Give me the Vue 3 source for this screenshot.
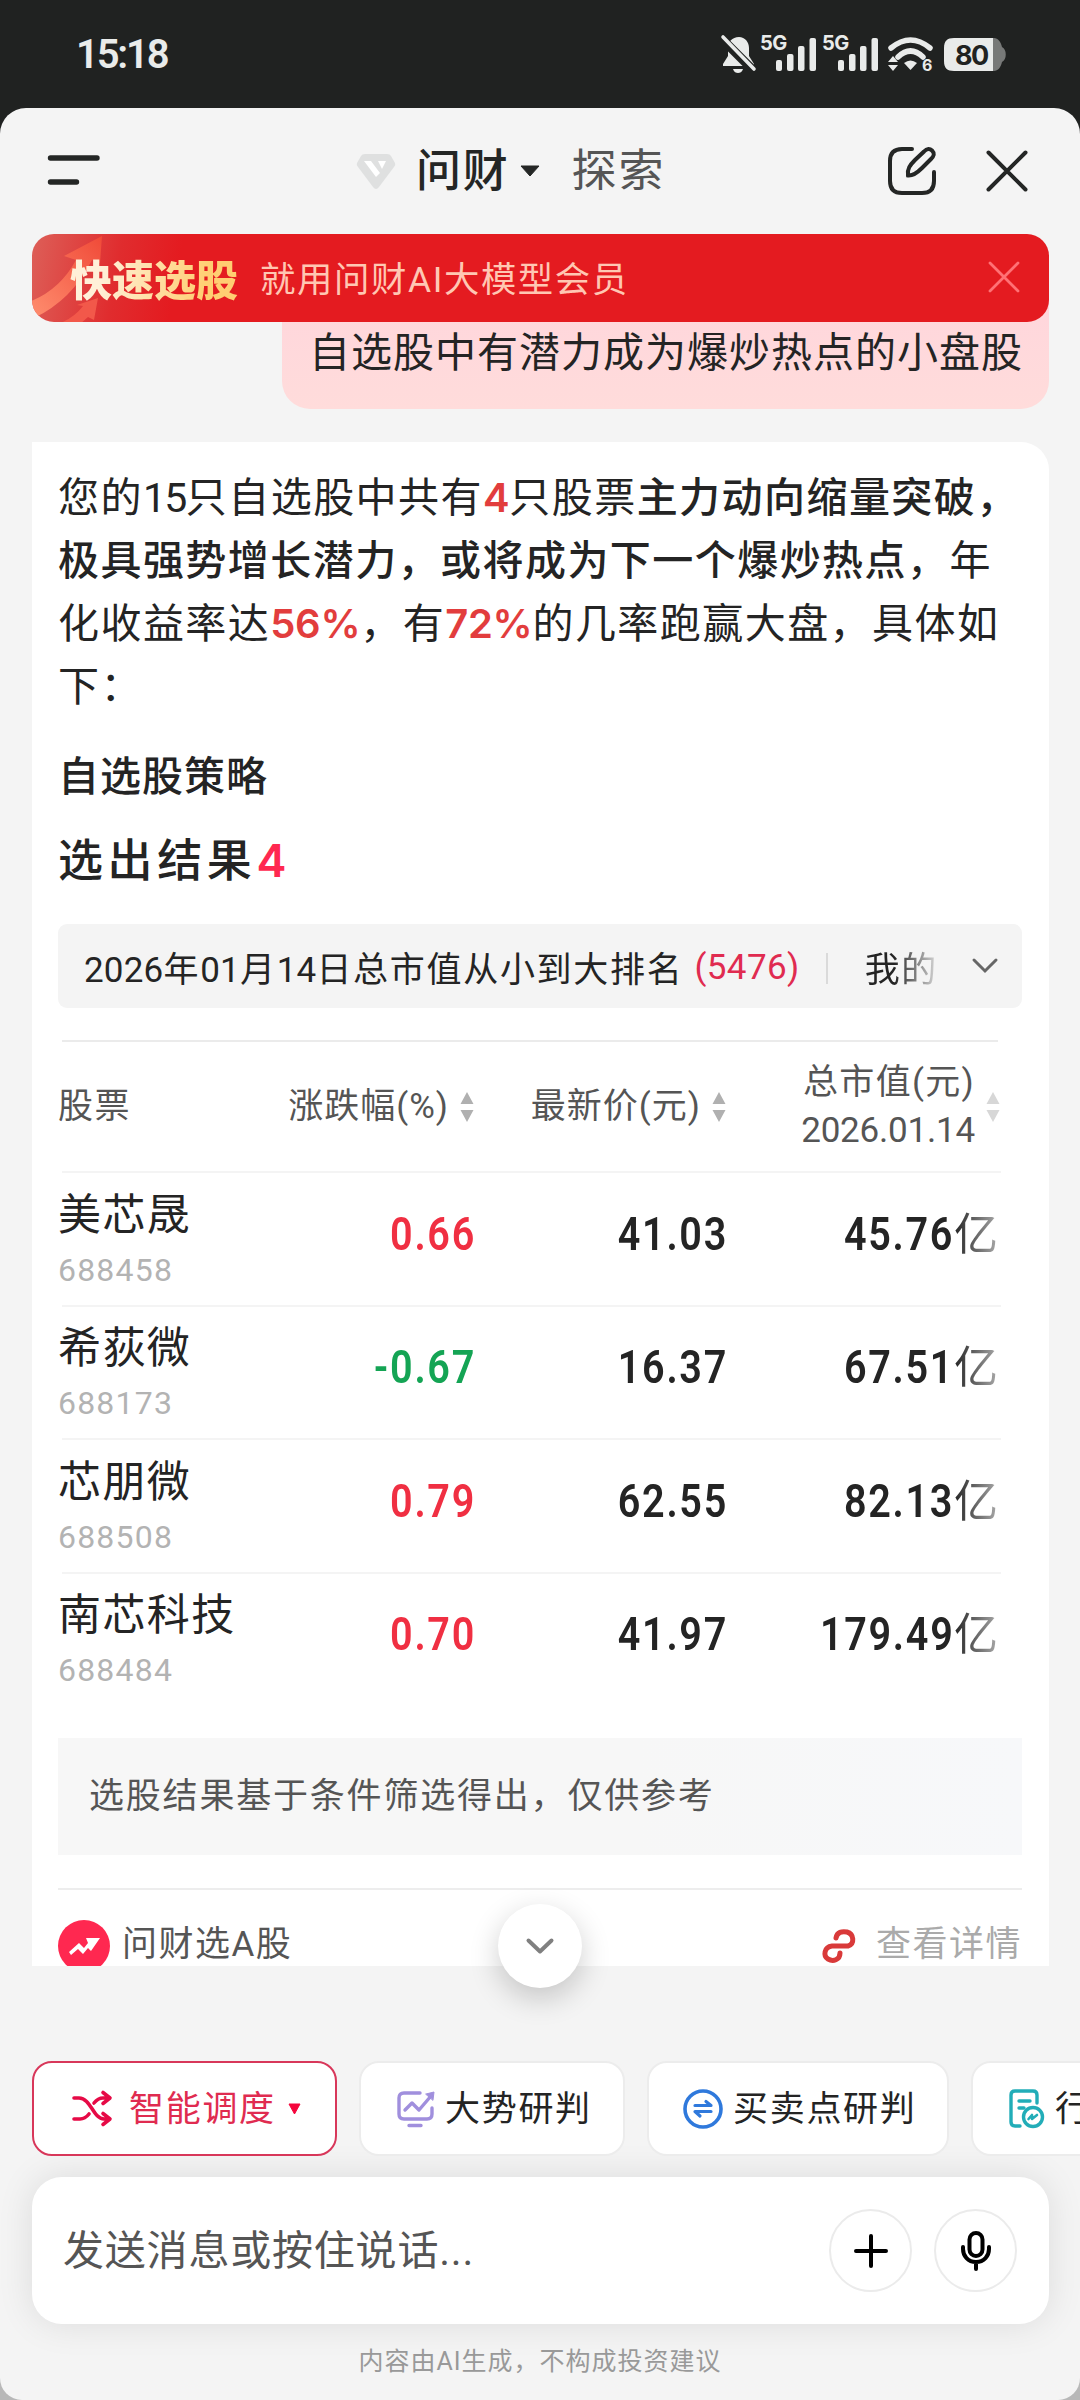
<script setup>
import { ref } from 'vue'

const draft = ref('')
const activeChip = ref('smart')

const columns = [
  { key: 'change', label: '涨跌幅(%)' },
  { key: 'price', label: '最新价(元)' },
  { key: 'cap', label: '总市值(元)', sub: '2026.01.14' }
]

const stocks = [
  { name: '美芯晟', code: '688458', change: '0.66', price: '41.03', cap: '45.76' },
  { name: '希荻微', code: '688173', change: '-0.67', price: '16.37', cap: '67.51' },
  { name: '芯朋微', code: '688508', change: '0.79', price: '62.55', cap: '82.13' },
  { name: '南芯科技', code: '688484', change: '0.70', price: '41.97', cap: '179.49' }
]

const chips = [
  { key: 'smart', label: '智能调度' },
  { key: 'trend', label: '大势研判' },
  { key: 'trade', label: '买卖点研判' },
  { key: 'industry', label: '行业研判' }
]

function isDown(value) {
  return value.startsWith('-')
}
</script>

<template>
  <div class="screen">
    <div class="status">
      <span class="time">15:18</span>
      <div class="status-icons">
        <svg class="bell" width="36" height="40" viewBox="0 0 36 40">
          <path d="M18 3c-7 0-11 5-11 11v8l-5 8v2h31v-2l-5-8v-8c0-6-4-11-10-11z" fill="#e9ebea" />
          <path d="M12 35h10c-1 3-3 4-5 4s-4-1-5-4z" fill="#e9ebea" />
          <path d="M0 4l32 32" stroke="#202221" stroke-width="9" />
          <path d="M2 3l31 32" stroke="#e9ebea" stroke-width="3.6" stroke-linecap="round" />
        </svg>
        <svg v-for="n in 2" :key="n" class="signal" width="56" height="40" viewBox="0 0 56 40">
          <text x="-1" y="16" class="net">5G</text>
          <rect x="15" y="26" width="6" height="11" rx="2" fill="#e9ebea" />
          <rect x="26" y="20" width="6.500" height="17" rx="2" fill="#e9ebea" />
          <rect x="37" y="12" width="6.500" height="25" rx="2" fill="#e9ebea" />
          <rect x="48.500" y="4" width="6.500" height="33" rx="2" fill="#e9ebea" />
        </svg>
        <svg class="wifi" width="46" height="40" viewBox="0 0 46 40">
          <path d="M3 14Q22.500-2 42 14" fill="none" stroke="#e9ebea" stroke-width="5.500" stroke-linecap="round" />
          <path d="M10 23Q22.500 11 35 23" fill="none" stroke="#e9ebea" stroke-width="5.500" stroke-linecap="round" />
          <path d="M16 29q6.500-5 13 0l-6.500 7z" fill="#e9ebea" />
          <path d="M0 28l5-6 5 6zM0 31h10l-5 6z" fill="#e9ebea" />
          <text x="34" y="37" class="wifi-no">6</text>
        </svg>
        <svg class="battery" width="62" height="40" viewBox="0 0 62 40">
          <path d="M48 4h2c4 0 7 4 8 9 5 2 5 13 0 15-1 5-4 9-8 9h-2z" fill="#777978" />
          <path d="M10 4h39v33H10C3 37 0 34 0 27V14C0 7 3 4 10 4z" fill="#e9ebea" />
          <text x="11" y="30.500" class="level">80</text>
        </svg>
      </div>
    </div>

    <div class="sheet">
      <header class="header">
        <svg class="menu" width="52" height="36" viewBox="0 0 52 36">
          <path d="M2.500 5h46.500M2.500 29h26" stroke="#242625" stroke-width="5.400" stroke-linecap="round" />
        </svg>
        <svg class="gem" width="40" height="38" viewBox="0 0 40 38">
          <path d="M9 1h22q3 0 4 2l4 7q1 2-1 4L23 34q-3 4-6 0L2 14q-2-2-1-4l4-7q1-2 4-2z" fill="#dfe0e0" />
          <path d="M8 8h7l9 12-4 4zM22 8h8l-4 8z" fill="#fff" />
        </svg>
        <span class="tab on">问财</span>
        <svg class="caret" width="20" height="12" viewBox="0 0 20 12">
          <path d="M1 1h18l-9 10z" fill="#242625" stroke="#242625" stroke-linejoin="round" />
        </svg>
        <span class="tab">探索</span>
        <svg class="edit" width="50" height="50" viewBox="0 0 50 50" fill="none" stroke="#242625" stroke-width="4" stroke-linecap="round">
          <path d="M25 3H15Q3 3 3 15V35Q3 47 15 47H35Q47 47 47 35V26" />
          <path d="M21 29.500C20 23 23 19 28 14L37 5.500C40 2 43 2.500 45 4.500C48 7.500 47 10 44 13L35 22C30 27 26 30 21 29.500z" />
        </svg>
        <svg class="close" width="42" height="42" viewBox="0 0 42 42">
          <path d="M2.500 2.500l37 37M39.500 2.500l-37 37" stroke="#242625" stroke-width="4" stroke-linecap="round" />
        </svg>
      </header>

      <div class="banner">
        <svg class="banner-art" width="120" height="88" viewBox="0 0 120 88">
          <defs>
            <linearGradient id="arrow" x1="0" y1="1" x2="1" y2="0">
              <stop offset="0" stop-color="#ff8f70" />
              <stop offset="1" stop-color="#f04a38" />
            </linearGradient>
          </defs>
          <path d="M70 2l-2 27-8-3Q40 66 2 84l-5-16Q28 56 44 26l-12-4z" fill="url(#arrow)" />
          <path d="M66 64l-4 22-6-3-8 7H26q16-6 25-18l-6-1z" fill="#f2584a" />
        </svg>
        <span class="banner-title">快速选股</span>
        <span class="banner-text">就用问财AI大模型会员</span>
        <svg class="banner-close" width="32" height="32" viewBox="0 0 32 32">
          <path d="M2 2l28 28M30 2L2 30" stroke="#ff7175" stroke-width="2.800" stroke-linecap="round" />
        </svg>
      </div>

      <div class="bubble">自选股中有潜力成为爆炒热点的小盘股</div>

      <section class="card">
        <p class="summary">
          您的<i>15</i>只自选股中共有<em>4</em>只股票<b>主力动向缩量突破，</b><br />
          <b>极具强势增长潜力，或将成为下一个爆炒热点</b>，年<br />
          化收益率达<em>56%</em>，有<em>72%</em>的几率跑赢大盘，具体如<br />
          下：
        </p>
        <h3 class="strategy">自选股策略</h3>
        <h2 class="result">选出结果<span>4</span></h2>

        <div class="filter">
          <span class="filter-text"><i>2026</i>年<i>01</i>月<i>14</i>日总市值从小到大排名</span>
          <span class="filter-count">(5476)</span>
          <span class="bar"></span>
          <span class="filter-next">我的</span>
          <svg class="filter-arrow" width="26" height="16" viewBox="0 0 26 16">
            <path d="M2 2l11 11L24 2" fill="none" stroke="#666" stroke-width="3" stroke-linecap="round" />
          </svg>
        </div>

        <div class="table">
          <div class="row head">
            <span>股票</span>
            <span v-for="col in columns" :key="col.key" class="th" :class="col.key">
              <span>{{ col.label }}<template v-if="col.sub"><br /><i>{{ col.sub }}</i></template></span>
              <svg class="sort" width="14" height="32" viewBox="0 0 14 32">
                <path d="M7 1l6.500 12H.5zM7 31L.5 19h13z" fill="#b0b0b0" />
              </svg>
            </span>
          </div>
          <div v-for="stock in stocks" :key="stock.code" class="row">
            <div class="stock">
              <span class="name">{{ stock.name }}</span>
              <span class="code">{{ stock.code }}</span>
            </div>
            <span class="num" :class="isDown(stock.change) ? 'down' : 'up'">{{ stock.change }}</span>
            <span class="num">{{ stock.price }}</span>
            <span class="cap-num"><span class="num">{{ stock.cap }}</span><span class="unit">亿</span></span>
          </div>
        </div>

        <div class="notice">选股结果基于条件筛选得出，仅供参考</div>

        <div class="source">
          <svg class="source-logo" width="52" height="52" viewBox="0 0 52 52">
            <circle cx="26" cy="26" r="26" fill="#ff2850" />
            <path d="M11 32l10-9 5 5 4-5-2-5h14l-9 13-3-3-5 6-5-5-7 6z" fill="#fff" />
          </svg>
          <span class="source-name">问财选A股</span>
          <svg class="link" width="34" height="34" viewBox="0 0 34 34">
            <path d="M14 9C15 3 20 2 25 3C32 5 33 15 26 17H10C2 18 1 27 6 30C11 33 18 31 18 24" fill="none" stroke="#d93a3a" stroke-width="5" stroke-linecap="round" />
          </svg>
          <span class="more">查看详情</span>
        </div>
      </section>

      <div class="chips">
        <button class="to-bottom">
          <svg width="28" height="17" viewBox="0 0 28 17">
            <path d="M2.500 2.500L14 13.500 25.500 2.500" fill="none" stroke="#808080" stroke-width="4" stroke-linecap="round" stroke-linejoin="round" />
          </svg>
        </button>
        <button v-for="chip in chips" :key="chip.key" class="chip" :class="[chip.key, { active: activeChip === chip.key }]" @click="activeChip = chip.key">
          <svg v-if="chip.key === 'smart'" width="40" height="36" viewBox="0 0 40 36" fill="none" stroke="#e60a46" stroke-width="3.600" stroke-linecap="round" stroke-linejoin="round">
            <path d="M2 7h5c12 0 14 21 25 21h5M2 28h6q5 0 9-5M22 12q4-5 9-5h6M31 1.500L38 7l-7 5.500M31 22.500l7 5.500-7 5.500" />
          </svg>
          <svg v-else-if="chip.key === 'trend'" width="38" height="38" viewBox="0 0 38 38" fill="none" stroke="#a08fdd" stroke-width="3.400" stroke-linecap="round" stroke-linejoin="round">
            <path d="M23 3H7Q2 3 2 8V24Q2 29 7 29H30Q35 29 35 24V18M12 35.500h12M8 20l7-7 7 7L34 6" />
            <path d="M29 4l8-2-1 8z" fill="#a08fdd" stroke-width="1" />
          </svg>
          <svg v-else-if="chip.key === 'trade'" width="40" height="40" viewBox="0 0 40 40" fill="none" stroke="#2f79dc" stroke-linecap="round">
            <circle cx="20" cy="20" r="18" stroke-width="3.600" />
            <path d="M12 16.500h16L23 12.500M28 22.500H12L17 27" stroke-width="3.200" stroke-linejoin="round" />
          </svg>
          <svg v-else width="36" height="40" viewBox="0 0 36 40" fill="none" stroke="#22adb8" stroke-width="3.400" stroke-linecap="round" stroke-linejoin="round">
            <path d="M28 14V6Q28 2 24 2H6Q2 2 2 6V33Q2 37 6 37H11M10 12h11M10 19h5" />
            <circle cx="24" cy="28" r="9.500" />
            <path d="M19.500 30l3.500-4v4l5-4" stroke-width="2.600" />
          </svg>
          <span>{{ chip.label }}</span>
          <svg v-if="chip.key === 'smart'" class="chip-caret" width="13" height="12" viewBox="0 0 13 12">
            <path d="M1 1h11L6.500 11z" fill="#f5053c" stroke="#f5053c" stroke-linejoin="round" />
          </svg>
        </button>
      </div>

      <div class="composer">
        <input v-model="draft" placeholder="发送消息或按住说话..." />
        <button class="round">
          <svg width="34" height="34" viewBox="0 0 34 34">
            <path d="M17 2v30M2 17h30" stroke="#000" stroke-width="4" stroke-linecap="round" />
          </svg>
        </button>
        <button class="round">
          <svg width="32" height="42" viewBox="0 0 32 42" fill="none" stroke="#000" stroke-width="4" stroke-linecap="round">
            <rect x="9.500" y="3" width="13" height="23" rx="6.500" />
            <path d="M3 17v2c0 7 5 13 13 13s13-6 13-13v-2M16 32v7" />
          </svg>
        </button>
      </div>
      <p class="disclaimer">内容由AI生成，不构成投资建议</p>
    </div>
  </div>
</template>

<style>
body {
  margin: 0;
}
</style>

<style scoped>
.screen {
  display: flex;
  flex-direction: column;
  width: 1080px;
  height: 2400px;
  overflow: hidden;
  background: linear-gradient(#202221 0 50%, #b8b8b8 50%);
  color: #242424;
  font-family: Roboto, "Noto Sans CJK SC", sans-serif;
}

svg {
  display: block;
  flex: none;
  overflow: visible;
}

i {
  font-style: normal;
}

button {
  padding: 0;
  border: 0;
  background: #fff;
  color: inherit;
  font: inherit;
}

/* status bar */
.status {
  display: flex;
  align-items: center;
  justify-content: space-between;
  height: 108px;
  padding: 0 74px 0 76px;
  color: #e9ebea;
}

.time {
  font-size: 40px;
  font-weight: 600;
  letter-spacing: -2.2px;
}

.status-icons {
  display: flex;
  gap: 6px;
}

.bell {
  margin-right: -2px;
}

.wifi {
  margin: 0 4px 0 3px;
}

.net {
  font: 700 20px Inter, sans-serif;
  letter-spacing: -0.6px;
  fill: #e9ebea;
}

.wifi-no {
  font: 700 16px Inter, sans-serif;
  fill: #e9ebea;
}

.level {
  font: 700 27px Inter, sans-serif;
  letter-spacing: -1.5px;
  fill: #202221;
}

/* sheet */
.sheet {
  display: flex;
  flex-direction: column;
  height: 2292px;
  border-radius: 26px 26px 22px 22px;
  overflow: hidden;
  background: #f4f4f4;
}

.header {
  display: flex;
  flex: none;
  align-items: center;
  height: 126px;
  padding: 0 52px 0 48px;
}

.gem {
  margin: 2px 20px 0 256px;
}

.tab {
  padding-bottom: 8px;
  color: #555;
  font-size: 45px;
  letter-spacing: 1.8px;
}

.tab.on {
  color: #242625;
  font-weight: 500;
}

.caret {
  margin: 0 32px 0 10px;
}

.edit {
  margin: 0 49px 0 auto;
}

.banner {
  position: relative;
  display: flex;
  flex: none;
  align-items: center;
  z-index: 1;
  height: 88px;
  margin: 0 31px 0 32px;
  padding: 0 29px 2px 38px;
  box-sizing: border-box;
  border-radius: 22px;
  overflow: hidden;
  background: linear-gradient(100deg, #dd5f58 0, #e02c2e 90px, #e41b20 150px);
}

.banner-art {
  position: absolute;
  left: 0;
  top: 0;
}

.banner-title {
  position: relative;
  background: linear-gradient(100deg, #fff0d8 20%, #ffce72 80%);
  background-clip: text;
  color: transparent;
  font-size: 42px;
  font-weight: 900;
}

.banner-text {
  margin-left: 22px;
  padding-bottom: 2px;
  color: #ffc7b3;
  font-size: 35.4px;
  letter-spacing: 1.6px;
}

.banner-close {
  margin-left: auto;
}

.bubble {
  flex: none;
  align-self: flex-end;
  height: 109px;
  margin: -22px 31px 33px 0;
  padding: 23px 26px 0 27px;
  box-sizing: border-box;
  border-radius: 0 0 28px 28px;
  background: linear-gradient(#ffd6dc, #ffdcdb);
  font-size: 41px;
  line-height: 60px;
  letter-spacing: 1px;
}

/* answer card */
.card {
  display: flex;
  flex: none;
  flex-direction: column;
  height: 1524px;
  margin: 0 31px 0 32px;
  padding: 25px 27px 0 26px;
  box-sizing: border-box;
  border-top-right-radius: 28px;
  overflow: hidden;
  background: #fff;
}

.summary {
  margin: 0;
  font-size: 41px;
  line-height: 63px;
  letter-spacing: 1.45px;
  white-space: nowrap;
}

.summary b {
  font-weight: 500;
}

.summary i {
  letter-spacing: -1.6px;
}

.summary em {
  color: #e23d3d;
  font-family: Inter, sans-serif;
  font-size: 40px;
  font-style: normal;
  font-weight: 600;
  line-height: 40px;
  letter-spacing: -0.3px;
}

.strategy {
  margin: 28px 0 0;
  font-size: 41px;
  font-weight: 500;
  line-height: 60px;
  letter-spacing: 1px;
}

.result {
  margin: 20px 0 0;
  font-size: 45px;
  font-weight: 500;
  line-height: 70px;
  letter-spacing: 4.6px;
}

.result span {
  color: #ff2850;
  font-family: Inter, sans-serif;
  font-weight: 600;
  line-height: 45px;
}

.filter {
  display: flex;
  flex: none;
  align-items: center;
  height: 84px;
  margin-top: 27px;
  padding: 0 24px 0 26px;
  border-radius: 9px;
  background: #f4f4f4;
  font-size: 35px;
  letter-spacing: 1.7px;
  white-space: nowrap;
}

.filter-text i {
  letter-spacing: 0.2px;
}

.filter-count {
  margin-left: 11px;
  padding-top: 2px;
  color: #e02b50;
  letter-spacing: 0.4px;
}

.bar {
  width: 2px;
  height: 31px;
  margin: 4px 37px 0 26px;
  background: #dadada;
}

.filter-next {
  background: linear-gradient(90deg, #242424 40%, #dcdcdc);
  background-clip: text;
  color: transparent;
}

.filter-arrow {
  margin-left: auto;
}

.table {
  margin: 32px 24px 0 4px;
  border-top: 2px solid #ebebeb;
}

.row {
  display: grid;
  grid-template-columns: 154px 258px 252px 271px;
  align-items: center;
  height: 131.5px;
  margin-right: -3px;
  border-top: 2px solid #f4f4f4;
}

.row > :first-child {
  margin-left: -4px;
}

.head {
  height: 129px;
  border-top: 0;
  color: #555;
  font-size: 35px;
  line-height: 48px;
  letter-spacing: 1.4px;
}

.th {
  display: flex;
  align-items: center;
  justify-content: flex-end;
  gap: 11px;
  letter-spacing: 1px;
  text-align: right;
  white-space: nowrap;
}

.th.cap {
  margin-right: -3px;
  letter-spacing: 1.3px;
}

.cap i {
  letter-spacing: -0.2px;
}

.cap .sort {
  opacity: 0.5;
}

.stock {
  display: flex;
  flex-direction: column;
  white-space: nowrap;
}

.name {
  font-size: 43px;
  line-height: 62px;
  letter-spacing: 1.4px;
}

.code {
  color: #b3b3b3;
  font-size: 32px;
  line-height: 48px;
  letter-spacing: 1.2px;
}

/* squeezed digits, close to a DIN face */
.num {
  display: block;
  padding-bottom: 10px;
  margin-right: -2px;
  font-size: 46px;
  font-weight: 600;
  letter-spacing: 2px;
  text-align: right;
  white-space: nowrap;
  transform: scaleX(0.86);
  transform-origin: right;
}

.cap-num {
  display: flex;
  align-items: center;
  justify-content: flex-end;
}

.cap-num .num {
  margin-right: 0;
}

.up {
  color: #f02f42;
}

.down {
  color: #14a454;
}

.unit {
  margin-right: -1px;
  padding-bottom: 16px;
  background: linear-gradient(90deg, #242424, #aaa);
  background-clip: text;
  color: transparent;
  font-size: 44px;
}

.notice {
  flex: none;
  height: 117px;
  margin-top: 33px;
  padding-left: 31px;
  background: linear-gradient(90deg, #f7f7f7 60%, #f7f8fa);
  color: #555;
  font-size: 35px;
  line-height: 117px;
  letter-spacing: 1.8px;
}

.source {
  display: flex;
  flex: none;
  align-items: center;
  height: 112px;
  margin-top: 33px;
  border-top: 2px solid #ededed;
  color: #555;
  font-size: 35px;
  line-height: 40px;
  letter-spacing: 1.5px;
}

.source-name {
  margin-left: 12px;
  padding-bottom: 2px;
}

.link {
  margin: 0 20px 0 auto;
}

.more {
  padding-bottom: 2px;
  color: #aaa;
}

/* quick actions */
.chips {
  position: relative;
  display: flex;
  flex: none;
  gap: 22px;
  margin: 95px 0 21px 32px;
}

.to-bottom {
  position: absolute;
  left: 466px;
  top: -157px;
  display: flex;
  align-items: center;
  justify-content: center;
  width: 84px;
  height: 84px;
  border-radius: 50%;
  box-shadow: 0 10px 30px rgba(0, 0, 0, 0.2);
}

.chip {
  position: relative;
  z-index: 1;
  display: flex;
  flex: none;
  align-items: center;
  width: 266px;
  height: 95px;
  padding-left: 36px;
  box-sizing: border-box;
  border: 2px solid #ececec;
  border-radius: 20px;
  font-size: 35px;
  letter-spacing: 1.7px;
  white-space: nowrap;
}

.chip span {
  margin-left: 10px;
  padding-bottom: 6px;
}

.chip.active {
  border-color: #d8375a;
  color: #e02b50;
}

.chip.smart {
  width: 305px;
  padding-left: 38px;
}

.chip.smart span {
  margin-left: 17px;
}

.chip-caret {
  margin-left: 12px;
}

.chip.trade {
  width: 302px;
  padding-left: 34px;
}

.composer {
  display: flex;
  flex: none;
  align-items: center;
  gap: 22px;
  height: 147px;
  margin: 0 31px 0 32px;
  padding: 0 32px 0 31px;
  box-sizing: border-box;
  border-radius: 30px;
  background: #fff;
  box-shadow: 0 0 36px rgba(0, 0, 0, 0.1);
}

.composer input {
  flex: 1;
  padding: 0;
  border: 0;
  outline: 0;
  background: none;
  font: inherit;
  font-size: 41px;
  letter-spacing: 0.8px;
}

.composer input::placeholder {
  color: #555;
}

.round {
  display: flex;
  align-items: center;
  justify-content: center;
  width: 83px;
  height: 83px;
  border: 2px solid #ebebeb;
  border-radius: 50%;
}

.disclaimer {
  margin: 19px 0 0;
  color: #999;
  font-size: 25px;
  line-height: 38px;
  letter-spacing: 1px;
  text-align: center;
}
</style>
